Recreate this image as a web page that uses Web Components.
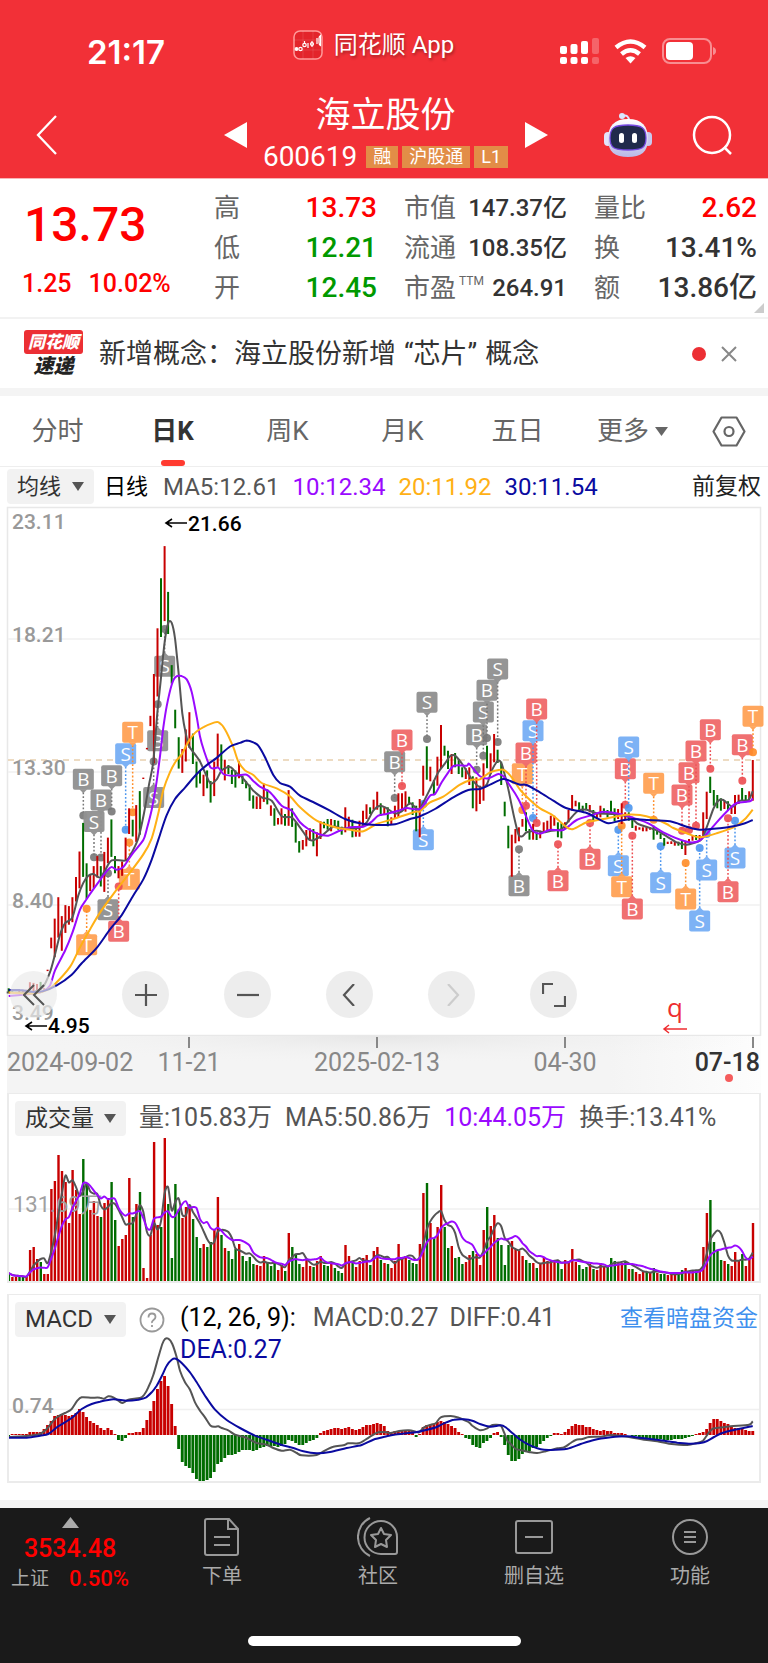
<!DOCTYPE html>
<html lang="zh-CN">
<head>
<meta charset="utf-8">
<meta name="viewport" content="width=device-width, initial-scale=1">
<title>海立股份 600619</title>
<style>
body{margin:0;background:#fff;color:#333;font-family:Roboto,"Noto Sans CJK SC",sans-serif;font-size:24px;line-height:32px}
</style>
</head>
<body>
<stock-page></stock-page>
<script>
const BASE = `*{box-sizing:border-box}button{font:inherit;color:inherit;background:none;border:0;padding:0;margin:0;display:flex;align-items:center;justify-content:center}svg{display:block;flex:none}a{text-decoration:none}`;
function define(name, css, html, after) {
  const t = document.createElement('template');
  t.innerHTML = `<style>${BASE}${css}</style>${html}`;
  customElements.define(name, class extends HTMLElement {
    constructor() {
      super();
      this.attachShadow({ mode: 'open' }).append(t.content.cloneNode(true));
      if (after) after(this.shadowRoot, this);
    }
  });
}

/* ---------- chart helpers ---------- */
const STEP = 10.63 / 3, X0 = 26 / 3;
const RED = '#c80000', GREEN = '#006c00', GREY = '#555', PURPLE = '#9a0aff', ORANGE = '#ffb015', NAVY = '#0a0aa0';
const barX = i => X0 + STEP * i;
/* A trace is digitised in sections: each has its own origin and vertical scale. */
const trace = (...sections) => sections.flatMap(([ox, oy, sy, s]) =>
  s.trim().split(/\s+/).map(p => { const [x, y] = p.split(',').map(Number); return [ox + x / 3, oy + y / sy]; }));
function smooth(p) {
  let d = `M${p[0][0].toFixed(1)} ${p[0][1].toFixed(1)}`;
  for (let i = 0; i < p.length - 1; i++) {
    const a = p[i - 1] || p[i], b = p[i], c = p[i + 1], e = p[i + 2] || c;
    d += `C${[b[0] + (c[0] - a[0]) / 7, b[1] + (c[1] - a[1]) / 7, c[0] - (e[0] - b[0]) / 7, c[1] - (e[1] - b[1]) / 7, c[0], c[1]].map(n => n.toFixed(1)).join(' ')}`;
  }
  return d;
}
const stroke = (d, c, w = 2) => `<path d="${d}" fill="none" stroke="${c}" stroke-width="${w}" stroke-linejoin="round"/>`;

/* ---------- status bar ---------- */
define('status-bar', `
:host{display:grid;grid-template-columns:1fr auto 1fr;align-items:start;padding:28px 52px 0 87px;height:92px;color:#fff}
time{font:600 33px/44px Inter,sans-serif;padding-top:2px}
.app{display:flex;gap:11px;align-items:center;height:34px;margin-right:56px;text-shadow:1px 2px 3px #0005}
.sys{display:flex;justify-content:flex-end;align-items:center;gap:15px;padding-top:9px}`,
`<time>21:17</time>
<div class="app"><svg width="30" height="30" viewBox="0 0 30 30"><rect x="1" y="1" width="28" height="28" rx="6" fill="#e3242b" stroke="#ff9a9a" stroke-width="1.5"/><path d="M1 10h28M1 20h28M10 1v28M20 1v28" stroke="#fff" stroke-opacity=".12"/><g fill="none" stroke="#fff" stroke-width="1.2"><circle cx="3.500" cy="19" r="1.300" fill="#fff"/><circle cx="7.500" cy="19" r="1.700"/><circle cx="11.500" cy="15" r="1.700"/><path d="M11.500 11v2M15 13v5M19 11v6M24 8v6"/><circle cx="19" cy="14" r="1.500"/><path d="M26 8.500q0-2 1.500-3v10q-1.500-1-1.500-3z"/></g></svg><span>同花顺 App</span></div>
<div class="sys"><svg width="39" height="28" viewBox="0 0 39 28" fill="#fff"><rect y="9" width="7" height="8" rx="2"/><rect x="10.500" y="7" width="7" height="10" rx="2"/><rect x="21" y="4" width="7" height="13" rx="2"/><rect y="20" width="7" height="7" rx="2"/><rect x="10.500" y="20" width="7" height="7" rx="2"/><rect x="21" y="20" width="7" height="7" rx="2"/><g opacity=".25"><rect x="32" y="1" width="7" height="16" rx="2"/><rect x="32" y="20" width="7" height="7" rx="2"/></g></svg>
<svg width="33" height="25" viewBox="0 0 33 25" fill="none" stroke="#fff" stroke-width="4.500"><path d="M2 8.500q14.500-12 29 0M7.500 15q9-7.500 18 0"/><path d="M11.500 19q5-3.500 10 0l-5 5.500z" fill="#fff" stroke="none"/></svg>
<svg width="54" height="26" viewBox="0 0 54 26"><rect x="1" y="1" width="48" height="24" rx="7" fill="none" stroke="#fff" stroke-opacity=".45" stroke-width="2"/><rect x="4" y="4" width="27" height="18" rx="4" fill="#fff"/><path d="M51 9q3 1 3 4t-3 4z" fill="#fff" opacity=".45"/></svg></div>`);

/* ---------- stock header ---------- */
define('mark-tag', `:host{display:block;background:#e28d47;color:#fff;font-size:18px;line-height:22px;height:22px;padding:0 7px;white-space:nowrap}`, `<slot></slot>`);
define('stock-header', `
:host{display:flex;align-items:center;height:87px;padding:0 35px 0 36px;color:#fff;border-bottom:1px solid #f9b4b6}
.mid{flex:1;display:flex;justify-content:center;gap:17px;padding-left:109px}
.name{width:244px;text-align:center}
h1{margin:0;font-weight:400;font-size:35px;line-height:44px}
.code{display:flex;justify-content:center;align-items:center;gap:4px;height:38px}
.code b{font-weight:400;font-size:28px;margin-right:5px}
.act{display:flex;gap:40px}`,
`<button aria-label="返回"><svg width="22" height="40" viewBox="0 0 22 40" fill="none" stroke="#fff" stroke-width="2.300"><path d="M20 1L2 20l18 19"/></svg></button>
<div class="mid"><button aria-label="上一只"><svg width="23" height="26" viewBox="0 0 23 26"><path d="M0 13L23 0v26z" fill="#fff"/></svg></button>
<div class="name"><h1>海立股份</h1><div class="code"><b>600619</b><mark-tag>融</mark-tag><mark-tag>沪股通</mark-tag><mark-tag>L1</mark-tag></div></div>
<button aria-label="下一只"><svg width="23" height="26" viewBox="0 0 23 26"><path d="M23 13L0 0v26z" fill="#fff"/></svg></button></div>
<div class="act"><button aria-label="助手"><svg width="48" height="46" viewBox="0 0 48 46"><defs><linearGradient id="g" x2="0" y2="1"><stop stop-color="#fff"/><stop offset="1" stop-color="#b9b8e6"/></linearGradient></defs><path d="M18 4q7-2 7 5" fill="none" stroke="#dfe2ff" stroke-width="2"/><circle cx="18" cy="4" r="3" fill="#d9e8ff"/><rect y="20" width="8" height="14" rx="4" fill="#e3e3fa"/><rect x="40" y="20" width="8" height="14" rx="4" fill="#c9c8ee"/><path d="M24 7C38 7 44 14 44 27S37 45 24 45 4 40 4 27 10 7 24 7z" fill="url(#g)"/><path d="M24 13C38 13 42 16 42 26S38 38 24 38 6 36 6 26 10 13 24 13z" fill="#202a4b" stroke="#7548e0" stroke-width="1.300"/><rect x="15" y="21" width="5" height="10" rx="2.500" fill="#fff"/><rect x="28" y="21" width="5" height="10" rx="2.500" fill="#fff"/></svg></button>
<button aria-label="搜索"><svg width="41" height="41" viewBox="0 0 41 41" fill="none" stroke="#fff" stroke-width="2.500"><circle cx="20" cy="20" r="18"/><path d="M32 32l7 7"/></svg></button></div>`);

/* ---------- quote ---------- */
define('quote-item', `
:host{display:flex;justify-content:space-between;align-items:center;height:40px;color:#333;font-size:var(--size,28px);font-weight:500;white-space:nowrap}
.l{color:#666;font-size:26px;font-weight:400}`, `<span class="l"><slot name="label"></slot></span><span><slot></slot></span>`);
define('quote-panel', `
:host{display:grid;grid-template-columns:165px 1fr 1fr 1fr;column-gap:27px;padding:9px 11px 9px 22px;border-bottom:2px solid #f2f2f2;position:relative;height:140px;box-sizing:border-box}
.price{color:#f00;font-weight:500;font-size:48px;line-height:56px;padding:9px 0 0 2px}
.chg{color:#f00;font-weight:500;font-size:25px;display:flex;gap:17px;margin-top:14px;line-height:34px}
.up{color:#f00}.dn{color:#090}
.b{--size:24px}
sup{font-size:12px;line-height:12px;vertical-align:12px;margin-left:3px}
.corner{position:absolute;right:4px;bottom:4px}`,
`<div><div class="price">13.73</div><div class="chg"><span>1.25</span><span>10.02%</span></div></div>
<div><quote-item><span slot="label">高</span><span class="up">13.73</span></quote-item><quote-item><span slot="label">低</span><span class="dn">12.21</span></quote-item><quote-item><span slot="label">开</span><span class="dn">12.45</span></quote-item></div>
<div class="b"><quote-item><span slot="label">市值</span>147.37亿</quote-item><quote-item><span slot="label">流通</span>108.35亿</quote-item><quote-item><span slot="label">市盈<sup>TTM</sup></span>264.91</quote-item></div>
<div><quote-item><span slot="label">量比</span><span class="up">2.62</span></quote-item><quote-item><span slot="label">换</span>13.41%</quote-item><quote-item><span slot="label">额</span>13.86亿</quote-item></div>
<svg class="corner" width="10" height="10" viewBox="0 0 10 10"><path d="M10 0v10H0z" fill="#ccc"/></svg>`);

/* ---------- news ---------- */
define('news-strip', `
:host{display:flex;align-items:center;height:77px;padding:0 31px 0 24px;border-bottom:8px solid #f4f4f4;box-sizing:border-box}
a{flex:1;color:#333;font-size:27px;margin-left:16px;white-space:nowrap}
.topic{margin:0 8px}
.badge{width:59px;text-align:center;font-weight:900;font-style:italic;font-size:17px;line-height:24px}
.badge b{display:block;background:#ec2f34;color:#fff;border-radius:3px}
.badge i{display:block;font-size:20px;line-height:24px;color:#222}
.dot{width:14px;height:14px;border-radius:50%;background:#ec2f34;margin-right:15px}`,
`<div class="badge"><b>同花顺</b><i>速递</i></div><a href="#news">新增概念：海立股份新增<span class="topic">“芯片”</span>概念</a><span class="dot"></span>
<button aria-label="关闭"><svg width="16" height="16" viewBox="0 0 16 16" stroke="#888" stroke-width="2"><path d="M1 1l14 14M15 1L1 15"/></svg></button>`);

/* ---------- period tabs ---------- */
define('period-tabs', `
:host{display:flex;height:71px;border-bottom:1px solid #eee;color:#666;font-size:26px}
button{flex:115 1 0;position:relative;gap:6px}
button:last-child{flex-grow:78}
.on{color:#333;font-weight:700}
.on::after{content:"";position:absolute;left:calc(50% - 12px);bottom:0;width:24px;height:6px;border-radius:3px;background:#ff3b30}`,
`<button>分时</button><button class="on">日K</button><button>周K</button><button>月K</button><button>五日</button><button>更多<svg width="13" height="9" viewBox="0 0 13 9"><path d="M0 0h13L6.500 9z" fill="#666"/></svg></button><button aria-label="设置"><svg width="34" height="31" viewBox="0 0 34 31" fill="none" stroke="#666" stroke-width="2.200"><path d="M9.500 1.500h15L32.500 15.500l-8 14h-15l-8-14z" stroke-linejoin="round"/><circle cx="17" cy="15.500" r="4.500"/></svg></button>`);

/* ---------- drop-down chip and legends ---------- */
define('drop-chip', `
:host{display:inline-flex;position:relative;flex:none;height:35px}
select{appearance:none;border:0;margin:0;background:#f2f2f2;border-radius:4px;font-family:inherit;font-size:var(--size,23px);line-height:35px;color:#333;padding:0 32px 0 10px;height:35px}
svg{position:absolute;right:10px;top:13px;pointer-events:none}`,
`<select></select><svg width="12" height="9" viewBox="0 0 12 9"><path d="M0 0h12L6 9z" fill="#555"/></svg>`,
(r, el) => { const s = r.querySelector('select'); s.setAttribute('aria-label', el.getAttribute('label') || '指标'); s.add(new Option(el.getAttribute('value') || '')); });

define('ma-legend', `
:host{display:flex;align-items:center;height:39px;padding:0 7px;gap:13px;color:#555;white-space:nowrap}
drop-chip{--size:22px;margin-right:-3px}
.k{color:#000;font-size:22px;margin-right:2px}.p{color:${PURPLE}}.o{color:${ORANGE}}.n{color:${NAVY}}
.r{color:#222;font-size:23px;margin-left:auto}`,
`<drop-chip value="均线" label="均线"></drop-chip><span class="k">日线</span><span>MA5:12.61</span><span class="p">10:12.34</span><span class="o">20:11.92</span><span class="n">30:11.54</span><span class="r">前复权</span>`);

/* ---------- candlestick chart ---------- */
const A = [0, -7, 2.8], B = [250, 133, 3], C = [500, 133, 3];
const CANDLES = [
 [0, A, 'g1370-1382 g1374-1380 r1380-1386 r1376-1384 r1376-1382 r1374-1382 r1353-1375 r1355-1378 r1358-1378 g1352-1375 r1370-1374 r1318-1322 r1228-1258 r1175-1283 r1115-1228 r1168-1265 r1137-1215 r1140-1192 r1115-1185 r1058-1127 r987-1090 g907-1058 g1020-1120 r1050-1098 r1028-1090 r1000-1060 g1028-1085 r988-1100 r948-1020 g897-1002 g1000-1048 r1028-1062 r1015-1055 r948-1012 r866-938 g898-945 r857-960 g818-940 r780-784 r697-701 r607-636 r490-740 r362-553 g222-386 r132-342 g260-378 g465-517 g590-642 g667-755 r700-767 r645-735 r597-697 g657-742 g735-808 g760-797 r772-832 g760-810 g790-850 r735-832 r657-750 g687-760 r730-788 g745-770 g758-798 g760-808 r735-782 g775-798 g790-810 g800-845 g830-867 r833-868 r833-868 r797-848 g813-855 r858-887 g866-915 r893-911 r866-911 g882-915 r815-915 g866-918 g905-962 g958-990'],
 [83, B, 'r603-632 r573-622 r568-605 g570-622 r580-652 r547-600 g548-568 g540-572 r540-577 g543-565 g545-572 g563-587 r505-580 r533-565 g542-595 r565-593 r545-593 r515-560 r496-540 g505-525 r482-512 r458-512 g493-530 r505-525 g505-562 r535-558 r500-537 r463-535 r463-515 r457-518 g473-497 g490-528 g500-577 r480-595 r380-470 g322-422 r383-427 g423-467 r353-440 r258-390 g320-350 g335-390 r345-405 g342-385 g360-405 g385-415 r388-420 r385-438 g412-508 r415-517 r440-495 r373-485 g320-388 r343-405 r285-370 g332-372 g368-438 g488-532 g560-628 r587-713'],
 [143, C, 'r570-613 r565-607 r540-563 g520-577 g570-602 r555-602 g580-603 r575-598 r550-582 r545-578 r530-575 r530-560 g550-595 g553-598 r550-570 r513-550 r468-515 r485-502 g490-515 g500-520 g492-512 r498-520 g513-547 r525-540 r500-535 g508-525 g513-535 g485-525 g508-547 r510-540 r493-555 r520-540 g520-545 g533-567 r560-575 r565-572 r565-577 r565-577 r565-572 g560-602 g575-587 g583-600 g597-620 r608-615 r607-615 r607-620 g608-620 g605-630 r605-648 r600-612 r590-605 g588-603 r588-603 r520-590 r458-540 g413-462 g453-500 g468-508 g478-515 r485-510 g487-515 r505-525 r468-525 r467-495 g447-485 g468-490 r457-485 r363-485']];
const MA5 = trace([...A, '20,1382 100,1380 130,1365 150,1325 165,1275 180,1220 195,1188 217,1172 235,1110 250,1075 265,1055 280,1050 300,1060 315,1040 335,1012 378,1012 395,990 415,950 432,880 447,800 460,735 472,600 483,500 494,400 505,347 515,347 525,390 536,490 547,600 558,660 568,693 585,715 600,735 617,770 632,797 650,785 665,760 690,750 707,765 722,775 740,795'],
 [...B, '10,455 35,475 65,485 95,532 125,535 150,565 175,600 190,604 215,590 250,563 275,568 325,567 350,550 370,515 390,500 410,508 435,523 455,517 480,493 505,512 520,490 545,440 565,400 585,373 600,352 615,350 640,380 665,420 690,445 710,437 725,395 745,365 755,375 765,410 775,450 785,500 797,555 806,588'],
 [...C, '67,592 80,580 110,575 130,580 155,575 185,570 210,540 235,515 260,512 290,523 340,525 390,535 415,555 465,572 500,592 530,610 560,617 600,605 610,590 622,560 640,510 655,485 670,483 697,503 720,485 745,483 758,457']);
const MA10 = trace([...A, '26,1392 100,1385 130,1378 150,1362 165,1320 195,1265 217,1215 240,1150 260,1120 290,1080 320,1042 335,1030 350,1038 370,1030 385,1010 400,990 430,955 440,925 455,870 470,790 480,720 490,640 500,580 515,520 527,498 545,496 560,505 575,540 590,610 600,665 612,705 632,752 655,752 670,770 700,775 740,772'],
 [...B, '10,426 30,443 60,460 95,500 125,515 150,550 175,570 205,585 235,590 265,577 300,565 340,563 365,548 385,530 410,525 445,515 470,507 510,510 540,470 555,465 575,430 595,400 612,380 650,380 658,375 690,412 715,418 745,405 760,412'],
 [...C, '20,425 45,463 60,490 95,570 110,582 125,583 150,572 190,573 230,543 280,527 310,518 370,527 410,540 445,553 490,580 560,608 595,607 620,585 650,550 685,513 710,492 750,487 758,478']);
const MA20 = trace([...A, '26,1382 100,1385 140,1375 165,1358 210,1310 240,1255 270,1205 300,1158 345,1100 385,1052 430,995 455,950 475,880 490,815 510,765 527,735 545,715 565,680 585,655 612,638 640,627 655,625 675,645 700,695 715,735 735,760'],
 [...B, '10,408 35,432 80,448 120,472 150,505 200,545 255,565 300,572 340,577 380,555 430,540 495,518 510,517 540,490 580,473 630,437 665,422 690,421 720,400 750,392 765,395 785,415'],
 [...C, '60,452 90,483 120,508 160,530 200,565 220,570 260,550 310,540 380,527 420,528 460,538 500,555 520,567 560,583 600,595 650,583 705,563 735,540 758,512']);
const MA30 = trace([...A, '26,1375 60,1375 100,1380 130,1378 170,1362 215,1332 245,1300 290,1257 330,1205 365,1165 400,1110 430,1065 455,1010 480,940 500,885 525,840 555,808 590,770 620,745 650,725 690,693 720,683 740,676'],
 [...B, '12,311 25,320 45,355 70,408 90,432 120,443 150,470 195,492 240,515 285,540 330,553 380,558 435,556 480,540 510,532 555,510 610,475 655,453 690,450 720,437 760,420 790,430'],
 [...C, '60,437 80,438 120,460 160,485 200,508 260,522 290,537 325,553 360,545 400,540 440,543 510,547 560,563 600,572 660,568 700,562 735,553 758,543']);
/* signal flags: letter, colour, x, flag y, dot y */
const FLAGS = [
 [A, 'Bk250,785,886 Bk303,843,1004 Sk282,903,1003 Bk335,775,875 Sb377,713,926 To398,653,877 To388,1065,962 To260,1248,1147 Sk324,1150,1048 Br356,1210,1085 Sk494,468,364 Bk473,677,575 Sk461,836,735'],
 [B, 'Bk434,368,477 Br456,303,441 Sk531,190,300 Sb520,602,495 Bk680,287,392 Sk700,219,350 Bk711,154,297 Sk743,90,309'],
 [C, 'Bk57,740,631 To67,404,513 Br78,342,500 Sb99,275,537 Br110,210,552 Br174,725,616 Br270,661,552 Br376,389,497 Sb386,324,507 Sb355,680,572 To365,743,560 Br397,810,590 To461,433,542 Sb482,731,622 Br546,468,575 Br567,401,573 Br588,336,560 Br631,272,389 To557,780,672 Sb599,846,627 Sb620,693,585 Sb705,657,545 Br684,758,538 Br727,317,425 To759,232,340']];
const FLAG_COLOURS = { k: ['#929292', '#777'], r: ['#f06c6d', '#ec4c50'], b: ['#79b0f5', '#4b95ee'], o: ['#ffa458', '#ff8c26'] };

define('kline-chart', `
:host{display:grid;position:relative}
svg.plot{width:100%;height:auto;grid-area:1/1}
text{font-size:21px;fill:#999;font-family:Roboto,sans-serif;font-weight:500}
.mark{fill:#000}.f{font:400 19px "Open Sans",sans-serif;fill:#fff;text-anchor:middle}
.q{fill:#ee2d30;font:400 26px "Open Sans",sans-serif}
.bar{grid-area:1/1;align-self:end;display:flex;gap:55px;padding:0 0 18px 10px}
.bar button{width:47px;height:47px;border-radius:50%;background:#ebebebe0}
.bar button:first-child{margin-right:10px;background:#ebebebb0}`,
`<svg class="plot" viewBox="0 0 768 530"></svg>
<div class="bar"><button aria-label="最早"><svg width="22" height="22" viewBox="0 0 22 22" fill="none" stroke="#555" stroke-width="2"><path d="M11 1L1 11l10 10M21 1L11 11l10 10"/></svg></button>
<button aria-label="放大"><svg width="22" height="22" viewBox="0 0 22 22" stroke="#555" stroke-width="2.200"><path d="M0 11h22M11 0v22"/></svg></button>
<button aria-label="缩小"><svg width="22" height="22" viewBox="0 0 22 22" stroke="#555" stroke-width="2.200"><path d="M0 11h22"/></svg></button>
<button aria-label="左移"><svg width="22" height="22" viewBox="0 0 22 22" fill="none" stroke="#555" stroke-width="2.200"><path d="M15 0L5 11l10 11"/></svg></button>
<button aria-label="右移"><svg width="22" height="22" viewBox="0 0 22 22" fill="none" stroke="#ccc" stroke-width="2.200"><path d="M7 0l10 11L7 22"/></svg></button>
<button aria-label="全屏"><svg width="24" height="24" viewBox="0 0 24 24" fill="none" stroke="#555" stroke-width="2.200"><path d="M1 11V1h10M23 13v10H12"/></svg></button></div>`,
r => {
  let s = `<rect x="7.500" y="1.500" width="753" height="528" fill="none" stroke="#e8e8e8" stroke-width="1.500"/>`;
  for (const y of [133, 266, 399]) s += `<path d="M8 ${y}H760" stroke="#f0f0f0" stroke-width="1.500"/>`;
  s += `<path d="M8 254H760" stroke="#e8cfae" stroke-width="1.300" stroke-dasharray="6 5"/>`;
  for (const [y, t] of [[23, '23.11'], [136, '18.21'], [269, '13.30'], [402, '8.40'], [514, '3.49']]) s += `<text x="12" y="${y}">${t}</text>`;
  for (const [[ox, oy, sy], list] of FLAGS) for (const f of list.split(' ')) {
    const [x, y, d] = f.slice(2).split(',').map(Number), [fill, line] = FLAG_COLOURS[f[1]];
    const cx = ox + x / 3, cy = oy + y / sy, dy = oy + d / sy, up = dy > cy ? 1 : -1;
    s += `<path d="M${cx} ${cy + up * 13}V${dy}" stroke="${line}" stroke-width="1.500" stroke-dasharray="1.800 2"/><circle cx="${cx}" cy="${dy}" r="4" fill="${line}" opacity=".9"/>
<g opacity=".97"><rect x="${cx - 10.5}" y="${cy - 10.5}" width="21" height="21" rx="2" fill="${fill}"/><path d="M${cx - 4} ${cy + up * 10}l4 ${up * 4}l4 ${-up * 4}z" fill="${fill}"/></g><text class="f" x="${cx}" y="${cy + 7}">${f[0]}</text>`;
  }
  for (const [start, [, oy, sy], list] of CANDLES) list.split(' ').forEach((c, k) => {
    const [a, b] = c.slice(1).split('-').map(Number);
    s += `<path d="M${barX(start + k).toFixed(1)} ${(oy + a / sy).toFixed(1)}V${(oy + b / sy).toFixed(1)}" stroke="${c[0] === 'r' ? RED : GREEN}" stroke-width="2"/>`;
  });
  s += stroke(smooth(MA5), GREY) + stroke(smooth(MA10), PURPLE) + stroke(smooth(MA20), ORANGE) + stroke(smooth(MA30), NAVY);
  s += `<path d="M187 17h-21m6-4l-6 4 6 4M47 520H26m6-4l-6 4 6 4" fill="none" stroke="#000" stroke-width="1.600"/><text class="mark" x="188" y="25">21.66</text><text class="mark" x="48" y="527">4.95</text>
<text class="q" x="667" y="511">q</text><path d="M687 523h-23m5-4l-5 4 5 4" fill="none" stroke="#ee2d30" stroke-width="1.500"/>`;
  r.querySelector('.plot').innerHTML = s;
});

/* ---------- date axis ---------- */
define('date-axis', `
:host{display:block;margin:0 7px;background:linear-gradient(90deg,#f4f4f4 80%,#fdfdfd)}
svg{width:100%;height:auto}text{font-size:25px;fill:#888;font-family:Roboto,sans-serif}
.now{fill:#333;font-weight:500}`,
`<svg viewBox="0 0 754 57"><defs><radialGradient id="s" cx=".5" cy="0" r="1" gradientTransform="translate(0 0)"><stop stop-color="#e6e6e6"/><stop offset=".5" stop-color="#f4f4f4" stop-opacity="0"/></radialGradient></defs><rect x="0" y="0" width="754" height="57" fill="url(#s)"/><path d="M182 1v11M370 1v11M558 1v11M746 1v11" stroke="#888" stroke-width="2"/>
<text x="0" y="35">2024-09-02</text><text x="182" y="35" text-anchor="middle">11-21</text><text x="370" y="35" text-anchor="middle">2025-02-13</text><text x="558" y="35" text-anchor="middle">04-30</text><text class="now" x="753" y="35" text-anchor="end">07-18</text><circle cx="722" cy="42" r="4" fill="#f55c5c"/></svg>`);

/* ---------- sub chart frame ---------- */
define('sub-panel', `
:host{display:grid;margin:0 7px;border:2px solid #ebebeb;border-top-width:1px}
:host>*{grid-area:1/1}
.plot{display:block}
.legend{display:flex;align-items:flex-start;gap:13px;padding:7px 1px 0 6px;color:#555;font-size:25px;line-height:34px;white-space:nowrap;z-index:1}`,
`<div class="plot"><slot name="plot"></slot></div><div class="legend"><slot></slot></div>`);

const VOLUME = 'g8 r4 r4 g4 g4 r4 r31 r34 r22 g19 r7 r7 r92 r100 r126 r110 r99 r58 r111 r91 r67 g122 g97 r71 r80 r65 g64 r78 r83 g99 g61 r35 r42 r46 r103 g64 r77 g89 r13 r3 r46 r139 r56 g54 r143 g77 g23 g97 g72 r63 r74 r74 g62 g44 g33 r37 g34 g39 r52 r84 g46 r33 g30 g22 g32 r37 g25 g20 g24 g17 r16 r15 r25 g18 g15 g17 r11 r16 g10 r48 g34 g26 g17 r14 r22 r15 g14 r20 r25 g16 g15 r19 g13 g10 g8 r36 r25 g20 r14 r20 r23 r26 g16 r30 r34 g21 r18 g17 r13 r20 r37 r24 r25 g21 g18 g17 r37 r88 g98 r58 g43 r54 r96 g54 g33 r35 g23 g24 g17 r19 r26 g30 r27 r16 r51 g74 r55 r66 g43 g36 g16 g36 r40 r32 r30 r25 g21 g18 r18 g13 r17 r24 r20 r20 r20 g20 g12 r21 r20 r32 r19 g16 g12 g14 r17 g12 r11 r18 r15 g15 g23 g20 r19 r18 g19 r12 g12 r9 r7 r9 g9 r8 g13 r8 g7 g7 r6 r7 r7 g8 g11 r13 r10 r10 g10 r12 r34 r68 g81 g39 g30 g21 r20 g17 r15 r29 r20 g27 r15 r22 r58'.split(' ');
const average = n => VOLUME.map((_, i) => {
  const w = VOLUME.slice(Math.max(0, i - n + 1), i + 1).map(v => +v.slice(1));
  return [barX(i) - 9, 187 - w.reduce((a, b) => a + b, 0) / w.length];
});
define('volume-chart', `:host{display:block}svg{width:100%;height:auto}text{font:400 22px Roboto,"Noto Sans CJK SC",sans-serif;fill:#a0a0a0}`,
`<svg viewBox="0 0 750 187"></svg>`, r => {
  let s = `<path d="M0 115H750" stroke="#f0f0f0" stroke-width="1.500"/>`;
  VOLUME.forEach((v, i) => { s += `<rect x="${(barX(i) - 10).toFixed(1)}" y="${187 - v.slice(1)}" width="2.400" height="${v.slice(1)}" fill="${v[0] === 'r' ? RED : GREEN}"/>`; });
  s += `<text x="4" y="118">131.69万</text>` + stroke(smooth(average(5)), GREY) + stroke(smooth(average(10)), PURPLE);
  r.querySelector('svg').innerHTML = s;
});

const MACD = '-1 1 1 1 1 1 3 3 3 3 6 10 14 19 20 20 20 19 20 22 26 23 18 14 12 10 7 5 7 5 1 -5 -6 -3 2 2 3 3 7 15 24 34 46 54 59 49 31 9 -14 -27 -31 -33 -38 -44 -46 -46 -45 -43 -37 -29 -27 -23 -20 -20 -19 -17 -15 -15 -15 -16 -15 -13 -12 -11 -11 -11 -12 -11 -9 -5 -6 -8 -10 -10 -8 -6 -5 -3 2 4 5 6 7 7 6 7 8 6 5 6 8 10 10 11 12 11 9 4 3 4 4 5 5 5 4 -2 1 8 10 10 11 13 14 13 11 9 7 3 1 -3 -4 -10 -12 -13 -8 -6 -3 2 3 -2 -10 -20 -26 -26 -24 -19 -16 -16 -13 -12 -9 -6 -3 -1 2 2 1 3 6 9 11 10 10 8 8 6 5 4 5 4 4 2 2 2 1 0 -1 -1 -2 -3 -3 -3 -4 -4 -4 -5 -5 -5 -4 -4 -4 -3 -2 -1 1 2 3 6 12 16 16 14 12 11 9 7 7 6 5 4 4 9'.split(' ').map(Number);
const DIFF = trace([-9, -6, 3, '26,444 85,440 120,435 140,420 160,395 175,382 195,372 215,360 232,335 245,325 275,326 300,326 312,329 325,322 340,325 355,335 368,342 385,332 420,327 432,318 445,295 460,258 475,205 487,165 495,150 505,149 517,165 530,205 540,245 555,280 570,302 585,340 600,365 615,385 632,410 645,413 655,412 665,417 685,424 705,437 735,445 770,462 800,467 820,477 845,485 870,482 890,492 905,499 950,498 970,487 1000,473 1030,469 1045,463 1075,463 1095,453 1115,440 1135,430 1160,430'],
 [375, -6, 3, '20,432 45,426 75,424 95,428 105,430 120,415 140,407 155,403 170,385 200,381 225,386 240,393 255,400 265,410 288,424 310,418 325,408 350,410 360,430 370,455 380,465 395,480 410,483 440,490 460,492 485,487 520,478 540,475 560,462 575,453 595,450 615,444 650,443 680,438 730,443 780,452 820,457 855,464 910,468 935,463 957,455 975,430 990,418 1040,412 1095,407 1106,397']);
const DEA = trace([-9, -6, 3, '26,446 80,446 120,440 145,435 175,412 215,387 245,360 275,345 300,338 340,331 380,335 415,332 437,326 455,310 470,290 487,258 500,230 515,212 527,209 545,222 570,250 590,280 615,320 645,362 680,393 720,417 765,440 800,452 845,468 880,477 910,487 950,493 990,489 1040,477 1085,468 1120,452 1160,442'],
 [375, -6, 3, '30,437 95,430 130,422 160,413 180,403 210,392 240,391 265,395 290,406 320,413 350,409 365,415 385,432 410,453 440,470 470,481 500,483 550,479 590,465 630,453 680,445 730,442 780,448 830,454 880,461 920,464 960,460 990,444 1015,432 1050,423 1106,411']);
define('macd-chart', `:host{display:block}svg{width:100%;height:auto}text{font:500 21px Roboto,sans-serif;fill:#999}`,
`<svg viewBox="0 0 750 186"></svg>`, r => {
  let s = `<path d="M0 114.500H750" stroke="#f0f0f0" stroke-width="1.500"/>`;
  MACD.slice(0, 211).forEach((v, i) => { s += `<rect x="${(barX(i) - 10.5).toFixed(1)}" y="${140 - Math.max(v, 0)}" width="2.900" height="${Math.abs(v)}" fill="${v > 0 ? RED : GREEN}"/>`; });
  s += `<text x="3" y="118">0.74</text>` + stroke(smooth(DIFF), GREY) + stroke(smooth(DEA), NAVY);
  r.querySelector('svg').innerHTML = s;
});

/* ---------- bottom navigation ---------- */
define('nav-item', `
:host{flex:1}
a{display:flex;flex-direction:column;align-items:center;gap:4px;color:#aaa;font-size:20px;line-height:30px;padding-top:9px}
::slotted(svg){fill:none;stroke:#999;stroke-width:2}`, `<a href="#"><slot name="icon"></slot><slot></slot></a>`);
define('bottom-nav', `
:host{display:block;background:#1a1a1a;border-top:8px solid #f4f4f4;height:163px}
nav{display:flex;height:128px}
.idx{width:144px;flex:none;color:#f00;display:block;padding:9px 4px 0 0;font-weight:500}
.idx svg{margin:0 auto}
.v{font-size:25px;line-height:34px;text-align:center;margin-top:4px}
.r{display:flex;gap:20px;padding-left:11px;line-height:26px;font-size:22px;align-items:center}
.r span{font-size:19px;color:#aaa;font-weight:400}
.home{width:273px;height:10px;border-radius:5px;background:#fff;margin:0 auto}`,
`<nav><a class="idx" href="#index"><svg width="17" height="11" viewBox="0 0 17 11"><path d="M8.500 0L17 11H0z" fill="#aaa"/></svg><div class="v">3534.48</div><div class="r"><span>上证</span>0.50%</div></a>
<nav-item><svg slot="icon" width="40" height="40" viewBox="0 0 40 40"><path d="M3 4q0-2 2-2h22l9 10v24q0 2-2 2H5q-2 0-2-2zM26 2v10h10M12 20h16M12 28h16"/></svg>下单</nav-item>
<nav-item><svg slot="icon" width="42" height="40" viewBox="0 0 42 40"><path d="M24 4a16 16 0 1 0 0 33h14q2 0 2-2V20A16 16 0 0 0 24 4zM13 1a21 21 0 0 0 0 38"/><path d="M24 11l3 6 7 1-5 5 1 7-6-3-6 3 1-7-5-5 7-1z" stroke-linejoin="round"/></svg>社区</nav-item>
<nav-item><svg slot="icon" width="40" height="40" viewBox="0 0 40 40"><rect x="2" y="4" width="36" height="32" rx="2"/><path d="M11 20h18"/></svg>删自选</nav-item>
<nav-item><svg slot="icon" width="40" height="40" viewBox="0 0 40 40"><circle cx="20" cy="20" r="17"/><path d="M14 15h12M14 20h12M14 25h12"/></svg>功能</nav-item></nav>
<div class="home"></div>`);

/* ---------- page ---------- */
define('stock-page', `
:host{display:block}
header{background:#f23037}
.macd{margin-top:11px;margin-bottom:17px}
.lines{line-height:32px;padding-left:2px}
.p{color:${PURPLE}}.k{color:#000;margin-right:17px}.d{margin-right:11px}.n{color:${NAVY}}
.help{width:26px;height:32px}
button svg{margin-top:3px}
.link{margin-left:auto;color:#4090ee;font-size:23px}`,
`<header><status-bar></status-bar><stock-header></stock-header></header>
<quote-panel></quote-panel><news-strip></news-strip><period-tabs></period-tabs><ma-legend></ma-legend>
<kline-chart></kline-chart><date-axis></date-axis>
<sub-panel><volume-chart slot="plot"></volume-chart><drop-chip value="成交量" label="副图一"></drop-chip><span>量:105.83万</span><span>MA5:50.86万</span><span class="p">10:44.05万</span><span>换手:13.41%</span></sub-panel>
<sub-panel class="macd"><macd-chart slot="plot"></macd-chart><drop-chip value="MACD" label="副图二" style="--size:24px"></drop-chip><button class="help" aria-label="说明"><svg width="26" height="26" viewBox="0 0 26 26" fill="none" stroke="#999" stroke-width="1.800"><circle cx="13" cy="13" r="11.500"/><path d="M9.500 10.500q0-4 3.500-4t3.500 3.500q0 1.500-2 3t-1.500 3M13 18v2"/></svg></button><div class="lines"><span class="k">(12, 26, 9):</span><span class="d">MACD:0.27</span><span>DIFF:0.41</span><br><span class="n">DEA:0.27</span></div><a class="link" href="#flow">查看暗盘资金</a></sub-panel>
<bottom-nav></bottom-nav>`);
</script>
</body>
</html>
